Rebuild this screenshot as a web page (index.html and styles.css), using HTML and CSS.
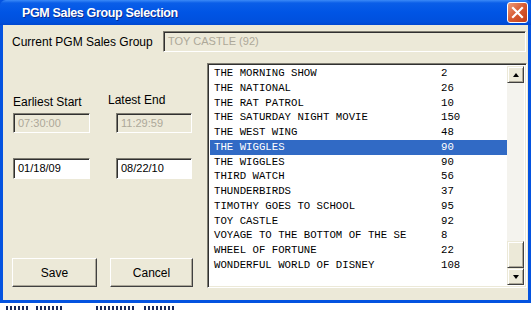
FILE: index.html
```html
<!DOCTYPE html>
<html lang="en">
<head>
    <meta charset="UTF-8">
    <title>PGM Sales Group Selection</title>
    <link rel="stylesheet" href="styles.css">
</head>
<body>
    <div class="window">
        <div class="titlebar">
            <span class="title">PGM Sales Group Selection</span>
            <span class="close">
                <svg width="13" height="13" viewBox="0 0 13 13">
                    <path d="M2 2 L11 11 M11 2 L2 11" stroke="#fff" stroke-width="2.2" stroke-linecap="square"/>
                </svg>
            </span>
        </div>
        <div class="client">
            <div class="current-row">
                <span class="lbl">Current PGM Sales Group</span>
                <div class="field disabled wide">TOY CASTLE (92)</div>
            </div>
            <div class="main">
                <div class="left">
                    <div class="labels">
                        <span class="lbl">Earliest Start</span>
                        <span class="lbl latest">Latest End</span>
                    </div>
                    <div class="pair">
                        <div class="field disabled">07:30:00</div>
                        <div class="field disabled">11:29:59</div>
                    </div>
                    <div class="pair dates">
                        <div class="field">01/18/09</div>
                        <div class="field">08/22/10</div>
                    </div>
                    <div class="buttons">
                        <button class="btn save">Save</button>
                        <button class="btn cancel">Cancel</button>
                    </div>
                </div>
                <div class="listbox">
                    <ul class="rows">
                        <li><span class="name">THE MORNING SHOW</span><span>2</span></li>
                        <li><span class="name">THE NATIONAL</span><span>26</span></li>
                        <li><span class="name">THE RAT PATROL</span><span>10</span></li>
                        <li><span class="name">THE SATURDAY NIGHT MOVIE</span><span>150</span></li>
                        <li><span class="name">THE WEST WING</span><span>48</span></li>
                        <li class="selected"><span class="name">THE WIGGLES</span><span>90</span></li>
                        <li><span class="name">THE WIGGLES</span><span>90</span></li>
                        <li><span class="name">THIRD WATCH</span><span>56</span></li>
                        <li><span class="name">THUNDERBIRDS</span><span>37</span></li>
                        <li><span class="name">TIMOTHY GOES TO SCHOOL</span><span>95</span></li>
                        <li><span class="name">TOY CASTLE</span><span>92</span></li>
                        <li><span class="name">VOYAGE TO THE BOTTOM OF THE SE</span><span>8</span></li>
                        <li><span class="name">WHEEL OF FORTUNE</span><span>22</span></li>
                        <li><span class="name">WONDERFUL WORLD OF DISNEY</span><span>108</span></li>
                    </ul>
                    <div class="scrollbar">
                        <div class="sb-btn"><span class="arrow up"></span></div>
                        <div class="track"></div>
                        <div class="thumb"></div>
                        <div class="sb-btn"><span class="arrow down"></span></div>
                    </div>
                </div>
            </div>
        </div>
    </div>
    <!-- page behind the dialog, only the tops of its words peek out -->
    <div class="behind">
        <span class="peek w1"></span>
        <span class="peek w2"></span>
        <span class="peek w3"></span>
        <span class="peek w4"></span>
    </div>
</body>
</html>
```

FILE: styles.css
```css
* {
    margin: 0;
    padding: 0;
    box-sizing: border-box;
}

body {
    width: 531px;
    height: 310px;
    overflow: hidden;
    background-color: #fff;
    font-family: "Liberation Sans", Arial, sans-serif;
    font-size: 12px;
    color: #000;
}

.window {
    width: 531px;
    height: 303px;
    background-color: #0453e0;
    padding-bottom: 3px;
    display: flex;
    flex-direction: column;
}

/* title bar */
.titlebar {
    height: 25px;
    display: flex;
    align-items: center;
    padding-left: 22px;
    padding-right: 3px;
    background: linear-gradient(#3b8af7 0, #0a5ee8 3px, #0055e5 12px, #0050dd 22px, #0047d0 25px);
    border-radius: 6px 6px 0 0;
}

.title {
    color: #fff;
    font-weight: bold;
    font-size: 12.5px;
    letter-spacing: -0.35px;
    text-shadow: 1px 1px 0 #0a2a8c;
    margin-top: 1px;
}

.close {
    margin-left: auto;
    width: 21px;
    height: 21px;
    border: 1px solid #fff;
    border-radius: 3px;
    background: linear-gradient(135deg, #ec9c7c, #d75a31 50%, #c23f18);
    display: flex;
    align-items: center;
    justify-content: center;
}

/* dialog body */
.client {
    margin: 0 3px;
    height: 275px;
    background-color: #ece9d8;
    padding-top: 6px;
}

.current-row {
    display: flex;
    align-items: center;
    height: 21px;
}

.current-row .lbl {
    margin-left: 9px;
}

.lbl {
    line-height: 14px;
    white-space: nowrap;
}

.field {
    height: 20px;
    border-top: 1px solid #7f7d72;
    border-left: 1px solid #7f7d72;
    border-bottom: 1px solid #fff;
    border-right: 1px solid #fff;
    box-shadow: inset 1px 1px 0 #303030;
    background-color: #fff;
    font-size: 11px;
    line-height: 18px;
    padding-left: 4px;
    white-space: nowrap;
    overflow: hidden;
}

.field.disabled {
    background-color: #ece9d8;
    color: #aca899;
}

.field.wide {
    width: 363px;
    height: 21px;
    margin-left: auto;
    margin-right: 2px;
    line-height: 19px;
}

.main {
    display: flex;
    margin-top: 11px;
}

.left {
    width: 204px;
    padding-left: 10px;
}

.labels {
    display: flex;
    padding-top: 32px;
}

.labels .lbl:first-child {
    width: 95px;
}

.labels .latest {
    margin-top: -2px;
}

.pair {
    display: grid;
    grid-template-columns: 77px 76px;
    column-gap: 26px;
    margin-top: 4px;
}

.pair.dates {
    margin-top: 25px;
}

.pair.dates .field {
    height: 21px;
    line-height: 19px;
}

.buttons {
    display: flex;
    gap: 13px;
    margin-top: 79px;
    margin-left: -1px;
}

.btn {
    height: 29px;
    background-color: #ece9d8;
    border-top: 1px solid #fff;
    border-left: 1px solid #fff;
    border-bottom: 1px solid #404040;
    border-right: 1px solid #404040;
    box-shadow: inset -1px -1px 0 #aca899;
    font-family: "Liberation Sans", Arial, sans-serif;
    font-size: 12px;
    color: #000;
}

.save {
    width: 85px;
}

.cancel {
    width: 83px;
}

/* list box */
.listbox {
    width: 320px;
    height: 225px;
    border-top: 1px solid #7f7d72;
    border-left: 1px solid #7f7d72;
    border-bottom: 1px solid #fff;
    border-right: 1px solid #fff;
    box-shadow: inset 1px 1px 0 #303030, inset -1px -1px 0 #ece9d8;
    background-color: #fff;
    padding: 2px;
    display: flex;
}

.rows {
    list-style: none;
    flex: 1;
    font-family: "Liberation Mono", "Courier New", monospace;
    font-size: 10.7px;
}

.rows li {
    display: flex;
    height: 14.75px;
    line-height: 14.75px;
    padding-left: 4px;
    white-space: nowrap;
}

.rows .name {
    width: 227px;
}

.rows li.selected {
    background-color: #316ac5;
    color: #fff;
}

.scrollbar {
    width: 17px;
    display: flex;
    flex-direction: column;
    background-color: #f4f3ee;
}

.track {
    flex: 1;
}

.sb-btn,
.thumb {
    background-color: #ece9d8;
    border-top: 1px solid #ece9d8;
    border-left: 1px solid #ece9d8;
    border-bottom: 1px solid #404040;
    border-right: 1px solid #404040;
    box-shadow: inset 1px 1px 0 #fff, inset -1px -1px 0 #aca899;
}

.sb-btn {
    height: 17px;
    display: flex;
    align-items: center;
    justify-content: center;
}

.thumb {
    height: 27px;
}

.arrow {
    width: 0;
    height: 0;
    border-left: 3.5px solid transparent;
    border-right: 3.5px solid transparent;
}

.arrow.up {
    border-bottom: 4px solid #000;
}

.arrow.down {
    border-top: 4px solid #000;
}

/* what shows under the window */
.behind {
    height: 7px;
    display: flex;
    align-items: flex-end;
    padding-left: 6px;
    gap: 8px;
}

.peek {
    height: 4px;
    background: repeating-linear-gradient(90deg, #1a2a5a 0 2px, transparent 2px 4px);
}

.w1 {
    width: 22px;
}

.w2 {
    width: 28px;
    margin-right: 24px;
}

.w3 {
    width: 40px;
}

.w4 {
    width: 30px;
}
```
